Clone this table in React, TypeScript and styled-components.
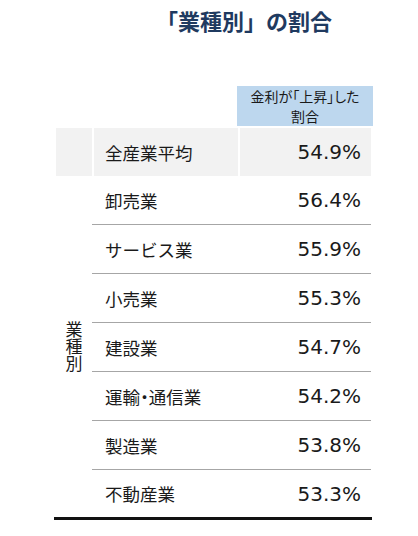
import React from "react";
import styled, { createGlobalStyle } from "styled-components";

const Global = createGlobalStyle`
  html, body { margin: 0; padding: 0; background: #ffffff; }
  body { font-family: "Noto Sans CJK JP", "Noto Sans", sans-serif; color: #222; }
`;

const Page = styled.div`
  width: 418px;
  height: 536px;
  padding-top: 7px;
  box-sizing: border-box;
`;

const Title = styled.h1`
  margin: 0;
  padding-left: 70px;
  text-align: center;
  font-size: 22px;
  line-height: 26px;
  font-weight: 700;
  color: #1f3a60;
  font-family: "Noto Sans CJK JP", sans-serif;
`;

const TableWrap = styled.div`
  margin: 53px 0 0 54px;
  width: 318px;
  padding-left: 2px;
  box-sizing: border-box;
  border-bottom: 3px solid #111;
`;

const Grid = styled.div`
  display: grid;
  grid-template-columns: 36px 146px 133px;
  grid-template-rows: 42px 48px repeat(6, 49px) 47px;
`;

const HeaderCell = styled.div`
  grid-column: 3;
  grid-row: 1;
  background: #bdd7ee;
  margin-bottom: 2px;
  margin-left: -1px;
  margin-right: -2px;
  display: flex;
  flex-direction: column;
  align-items: center;
  justify-content: center;
  text-align: center;
  font-size: 14px;
  line-height: 20px;
  color: #1a1a1a;
  font-feature-settings: "palt";
`;

const HeaderLine = styled.span`
  display: block;
  white-space: nowrap;
  height: 20px;
`;

const GroupLabel = styled.div`
  grid-column: 1;
  grid-row: 3 / span 7;
  display: flex;
  align-items: center;
  justify-content: center;
  writing-mode: vertical-rl;
  font-size: 17px;
  line-height: 17px;
  color: #1a1a1a;
`;

const AvgLabelCell = styled.div`
  grid-column: 1;
  grid-row: 2;
  background: #f2f2f2;
`;

const NameCell = styled.div<{ $row: number; $shaded?: boolean; $line?: boolean }>`
  grid-column: 2;
  grid-row: ${(p) => p.$row};
  display: flex;
  align-items: center;
  padding-left: ${(p) => (p.$shaded ? "11px" : "13px")};
  font-size: 17.5px;
  color: #1a1a1a;
  white-space: nowrap;
  background: ${(p) => (p.$shaded ? "#f2f2f2" : "transparent")};
  border-left: ${(p) => (p.$shaded ? "2px solid #fff" : "none")};
  border-bottom: ${(p) => (p.$line ? "1px solid #a6a6a6" : "none")};
`;

const Narrow = styled.span`
  font-feature-settings: "palt";
`;

const ValueCell = styled.div<{ $row: number; $shaded?: boolean; $line?: boolean }>`
  grid-column: 3;
  grid-row: ${(p) => p.$row};
  display: flex;
  align-items: center;
  justify-content: flex-end;
  padding-right: 10px;
  font-family: "DejaVu Sans", "Noto Sans", sans-serif;
  font-size: 20px;
  color: #1a1a1a;
  background: ${(p) => (p.$shaded ? "#f2f2f2" : "transparent")};
  border-left: ${(p) => (p.$shaded ? "2px solid #fff" : "none")};
  border-bottom: ${(p) => (p.$line ? "1px solid #a6a6a6" : "none")};
`;

const rows: [string, string][] = [
  ["卸売業", "56.4%"],
  ["サービス業", "55.9%"],
  ["小売業", "55.3%"],
  ["建設業", "54.7%"],
  ["運輸・通信業", "54.2%"],
  ["製造業", "53.8%"],
  ["不動産業", "53.3%"],
];

function renderName(name: string) {
  const parts = name.split("・");
  if (parts.length === 1) return name;
  return (
    <>
      {parts[0]}
      <Narrow>・</Narrow>
      {parts[1]}
    </>
  );
}

export default function App() {
  return (
    <Page>
      <Global />
      <Title>「業種別」の割合</Title>
      <TableWrap>
        <Grid>
          <HeaderCell>
            <HeaderLine>金利が「上昇」した</HeaderLine>
            <HeaderLine>割合</HeaderLine>
          </HeaderCell>
          <AvgLabelCell />
          <NameCell $row={2} $shaded>
            全産業平均
          </NameCell>
          <ValueCell $row={2} $shaded>
            54.9%
          </ValueCell>
          <GroupLabel>業種別</GroupLabel>
          {rows.map(([name, value], i) => {
            const line = i < rows.length - 1;
            return (
              <React.Fragment key={name}>
                <NameCell $row={i + 3} $line={line}>
                  {renderName(name)}
                </NameCell>
                <ValueCell $row={i + 3} $line={line}>
                  {value}
                </ValueCell>
              </React.Fragment>
            );
          })}
        </Grid>
      </TableWrap>
    </Page>
  );
}
